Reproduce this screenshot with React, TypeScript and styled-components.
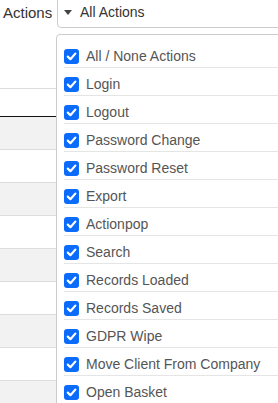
import React from 'react';
import { createGlobalStyle, styled } from 'styled-components';

const GlobalStyle = createGlobalStyle`
  html, body {
    margin: 0;
    padding: 0;
    background: #fff;
    overflow: hidden;
  }
  body {
    font-family: 'Liberation Sans', Arial, sans-serif;
    color: #333;
  }
`;

const Page = styled.div`
  position: relative;
  width: 278px;
  height: 403px;
  overflow: hidden;
`;

const Toolbar = styled.div`
  display: flex;
  align-items: center;
  height: 32px;
  margin-top: -4px;
`;

const Label = styled.label`
  width: 57px;
  padding-left: 3px;
  box-sizing: border-box;
  font-size: 15px;
  color: #333;
`;

const SelectBox = styled.div`
  display: flex;
  align-items: center;
  gap: 8px;
  flex: 1;
  height: 32px;
  box-sizing: border-box;
  margin-right: -20px;
  padding-left: 6px;
  border: 1px solid #ccc;
  border-radius: 4px;
  font-size: 14px;
  color: #333;
`;

const Caret = styled.span`
  width: 0;
  height: 0;
  border-left: 4px solid transparent;
  border-right: 4px solid transparent;
  border-top: 5px solid #444;
`;

const Table = styled.div`
  margin-top: 60px;
  border-top: 1px solid #ddd;
`;

const HeadRow = styled.div`
  height: 27px;
  border-bottom: 1px solid #111;
`;

const BodyRow = styled.div<{ $shaded: boolean }>`
  height: 32px;
  border-bottom: 1px solid #ddd;
  background: ${(p) => (p.$shaded ? '#f2f2f2' : '#fff')};
`;

const Panel = styled.div`
  position: absolute;
  left: 56px;
  top: 34px;
  width: 260px;
  height: 400px;
  box-sizing: border-box;
  padding: 4px 0 0 7px;
  background: #fff;
  border: 1px solid #ccc;
  border-radius: 4px;
`;

const Item = styled.label<{ $first?: boolean }>`
  display: flex;
  align-items: center;
  gap: 7px;
  height: 28px;
  box-sizing: border-box;
  padding-top: 5px;
  border-top: 1px solid ${(p) => (p.$first ? 'transparent' : '#e5e5e5')};
  font-size: 14px;
  color: #555;
  white-space: nowrap;
`;

const CheckBox = styled.span`
  display: flex;
  align-items: center;
  justify-content: center;
  width: 15px;
  height: 15px;
  border-radius: 3px;
  background: #0b6cfb;
  flex-shrink: 0;
`;

const Tick = () => (
  <svg width="11" height="11" viewBox="0 0 11 11">
    <path d="M1.8 5.6 L4.4 8.2 L9.3 2.6" fill="none" stroke="#fff" strokeWidth="2.2" strokeLinecap="round" strokeLinejoin="round" />
  </svg>
);

const actions = [
  'All / None Actions',
  'Login',
  'Logout',
  'Password Change',
  'Password Reset',
  'Export',
  'Actionpop',
  'Search',
  'Records Loaded',
  'Records Saved',
  'GDPR Wipe',
  'Move Client From Company',
  'Open Basket',
];

const App = () => {
  return (
    <Page>
      <GlobalStyle />
      <Toolbar>
        <Label>Actions</Label>
        <SelectBox>
          <Caret />
          All Actions
        </SelectBox>
      </Toolbar>
      <Table>
        <HeadRow />
        {Array.from({ length: 9 }).map((_, i) => (
          <BodyRow key={i} $shaded={i % 2 === 0} />
        ))}
      </Table>
      <Panel>
        {actions.map((name, i) => (
          <Item key={name} $first={i === 0}>
            <CheckBox>
              <Tick />
            </CheckBox>
            {name}
          </Item>
        ))}
      </Panel>
    </Page>
  );
};

export default App;
